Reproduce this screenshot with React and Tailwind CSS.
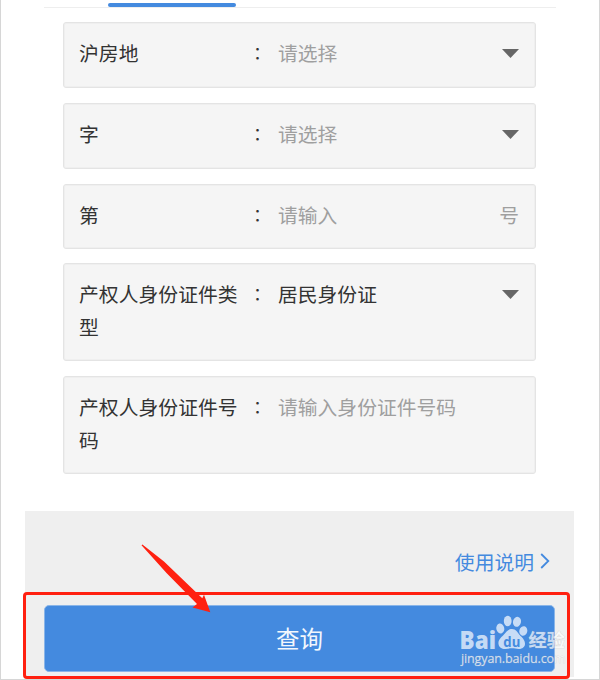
import React from 'react';
import clsx from 'clsx';

const FIELDS = [
  { id: 'district', label: '沪房地', value: '请选择', type: 'select', height: 'h-[66px]' },
  { id: 'word', label: '字', value: '请选择', type: 'select', height: 'h-[66px]' },
  { id: 'number', label: '第', value: '请输入', type: 'input', suffix: '号', height: 'h-[65px]' },
  { id: 'idType', label: '产权人身份证件类型', value: '居民身份证', type: 'select', filled: true, height: 'h-[98px]' },
  { id: 'idNumber', label: '产权人身份证件号码', value: '请输入身份证件号码', type: 'input', height: 'h-[98px]' },
];

const Field = ({ label, value, type, suffix, filled, height }) => (
  <div
    className={clsx(
      'flex items-start rounded-[3px] border border-[#e4e4e4] bg-[#f5f5f5] pt-[13px] pr-[15px] pl-[15px] leading-[33px] text-[#333] shadow-[inset_0_0_0_1px_#efefef]',
      height
    )}
  >
    <div className="w-[162px] shrink-0 tracking-[0.05px]">{label}</div>
    <div className="w-[37px] shrink-0 pl-[8px] text-[17px] font-['Noto_Sans_CJK_TC','Noto_Sans_CJK_SC',sans-serif]">：</div>
    <div className={clsx('flex-1', !filled && 'text-[#9f9f9f]')}>{value}</div>
    {type === 'select' && (
      <svg className="mt-[13px] mr-[1px]" width="17" height="9" viewBox="0 0 17 9">
        <path d="M0 0h17L8.5 9z" fill="#666" />
      </svg>
    )}
    {suffix && <div className="mr-[1px] text-[#9f9f9f]">{suffix}</div>}
  </div>
);

// Baidu Jingyan mark
const Watermark = () => (
  <svg className="absolute top-[100px] left-[430px]" width="120" height="60" viewBox="0 0 120 60" fill="#fff" fillOpacity="0.7">
    <text x="4.6" y="37.5" fontFamily="Open Sans, sans-serif" fontWeight="800" fontSize="24.5" textLength="36.4" lengthAdjust="spacingAndGlyphs">Bai</text>
    <ellipse cx="45.3" cy="17.5" rx="4" ry="5" transform="rotate(-12 45.3 17.5)" />
    <ellipse cx="52.7" cy="10" rx="3.9" ry="5.2" />
    <ellipse cx="62" cy="10.8" rx="4" ry="5" transform="rotate(14 62 10.8)" />
    <ellipse cx="68.3" cy="20" rx="4" ry="4.8" transform="rotate(15 68.3 20)" />
    <path d="M57 18c-4 0-5.7 3.2-8.500 6-2.700 2.600-5.500 5-5 9 .5 3.500 3.500 5.200 7 5 2.500-.2 4-.7 6.500-.7s4 .6 6.500.7c3.500.2 6.500-1.700 6.500-5.200 0-4-3-6.300-5.300-8.800C62.500 21.300 61 18 57 18z" />
    <text x="48.3" y="36" fill="#448adf" fillOpacity="1" fontFamily="Open Sans, sans-serif" fontWeight="700" fontSize="15" textLength="17" lengthAdjust="spacingAndGlyphs">du</text>
    <g stroke="#b8b8b8" strokeOpacity="0.5" strokeWidth="0.6" paintOrder="stroke">
      <text x="73.5" y="36" fontFamily="Noto Sans CJK SC, sans-serif" fontWeight="700" fontSize="18.2" textLength="36.4">经验</text>
      <text x="6" y="51.5" fontFamily="Open Sans, sans-serif" fontSize="12.5" textLength="104.5">jingyan.baidu.com</text>
    </g>
  </svg>
);

// Red frame and arrow drawn over the submit button
const Highlight = () => (
  <>
    <div className="absolute top-[81px] -left-[2px] h-[87px] w-[547px] rounded-[4px] border-3 border-[#ff2010]" />
    <svg className="absolute top-[33px] left-[115px]" width="72" height="72" viewBox="0 0 72 72">
      <path d="M1.5 1.2 2.4.6 24 17.500 62.300 54.300 64 50.800 70.300 68.300 52.500 63.500 57 60 26.500 29z" fill="#ff2010" />
    </svg>
  </>
);

const App = () => {
  return (
    <div className="flex h-[680px] w-[600px] flex-col overflow-hidden border-x border-b border-[#d6d6d6] bg-white font-['Noto_Sans_CJK_SC',sans-serif] text-[19.8px]">
      <div className="mx-[43px] h-[8px] w-[512px] shrink-0 border-b border-[#eee] pt-[3px] pl-[64px]">
        <div className="h-[4px] w-[128px] rounded-full bg-[#448adf]" />
      </div>

      <div className="mt-[14px] ml-[62px] flex w-[473px] flex-col gap-[14.8px]">
        {FIELDS.map(({ id, ...field }) => (
          <Field key={id} {...field} />
        ))}
      </div>

      <div className="relative mt-[36.8px] ml-[24px] h-[166px] w-[549px] shrink-0 bg-[#efefef]">
        <a className="flex h-[94px] items-center justify-end pt-[7px] pr-[24px] text-[#448adf]">
          使用说明
          <svg className="ml-[6px]" width="10" height="16" viewBox="0 0 10 16" fill="none" stroke="#448adf" strokeWidth="1.8">
            <path d="M1.200 1 8.300 8 1.200 15" />
          </svg>
        </a>
        <button className="ml-[19px] block h-[67px] w-[511px] rounded-[5px] border border-[#8ab5e8] bg-[#448adf] text-[23.5px] leading-[65px] text-[#f2f7fd]">
          查询
        </button>
        <Watermark />
        <Highlight />
      </div>
    </div>
  );
};

export default App;
